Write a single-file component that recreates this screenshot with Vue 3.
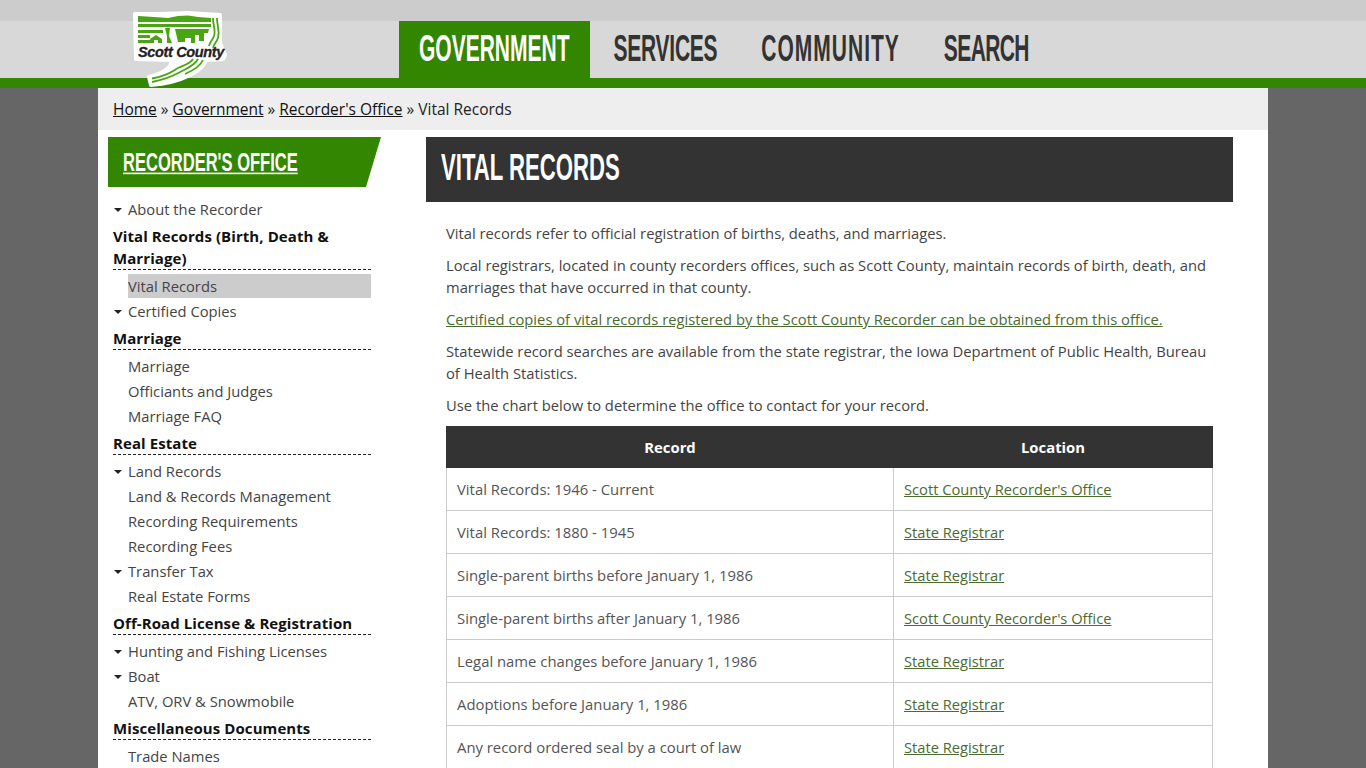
<script setup>
const nav = [
  { t: 'GOVERNMENT', ls: 0 },
  { t: 'SERVICES', ls: -0.25 },
  { t: 'COMMUNITY', ls: 1 },
  { t: 'SEARCH', ls: -0.6 },
]

const side = [
  { t: 'About the Recorder', caret: true },
  { t: 'Vital Records (Birth, Death & Marriage)', head: true },
  { t: 'Vital Records', active: true },
  { t: 'Certified Copies', caret: true },
  { t: 'Marriage', head: true },
  { t: 'Marriage' },
  { t: 'Officiants and Judges' },
  { t: 'Marriage FAQ' },
  { t: 'Real Estate', head: true },
  { t: 'Land Records', caret: true },
  { t: 'Land & Records Management' },
  { t: 'Recording Requirements' },
  { t: 'Recording Fees' },
  { t: 'Transfer Tax', caret: true },
  { t: 'Real Estate Forms' },
  { t: 'Off-Road License & Registration', head: true },
  { t: 'Hunting and Fishing Licenses', caret: true },
  { t: 'Boat', caret: true },
  { t: 'ATV, ORV & Snowmobile' },
  { t: 'Miscellaneous Documents', head: true },
  { t: 'Trade Names' },
]

const rows = [
  ['Vital Records: 1946 - Current', "Scott County Recorder's Office"],
  ['Vital Records: 1880 - 1945', 'State Registrar'],
  ['Single-parent births before January 1, 1986', 'State Registrar'],
  ['Single-parent births after January 1, 1986', "Scott County Recorder's Office"],
  ['Legal name changes before January 1, 1986', 'State Registrar'],
  ['Adoptions before January 1, 1986', 'State Registrar'],
  ['Any record ordered seal by a court of law', 'State Registrar'],
]
</script>

<template>
  <div class="page">
    <header class="header">
      <div class="top-band"></div>
      <div class="nav-band">
        <svg class="logo" width="100" height="80" viewBox="0 0 100 80">
          <path class="logo-bg" d="M5 4 L30 4 L58 3 L90 5 L90 33 L95 45 L93 49 L76 50 C74 56 68 61 58 66 C48 71 34 74 21 75 L19 67 C28 65 36 61 40 56 L42 50 L6 49 Z" />
          <g fill="#4aa512">
            <path d="M8 6 L24 7 L38 8 L48 6 L58 5.500 L68 7 L81 8 L81 12 L8 12 Z" />
            <rect x="8" y="14" width="73" height="3" />
            <rect x="8" y="20" width="25" height="3" />
            <rect x="8" y="25" width="12" height="3" />
            <rect x="8" y="30" width="12" height="3" />
            <path d="M20 33 L20 29 L26 25 L32 29 L32 33 L28 33 L28 30 L24 30 L24 33 Z" />
            <path d="M35 18 L40 18 L39 26 L42 33 L37 33 L37 26 Z" />
            <path d="M45 19 L79 19 L78 23 L74 23 L74 31 L69 31 L69 25 L65 25 L65 33 L61 33 L61 28 L55 28 L55 32 L48 32 Z" />
          </g>
          <g fill="none" stroke="#4aa512" stroke-width="1.800">
            <path d="M83 8 C83 16 86 20 84 26 C82 31 80 32 79 36" />
            <path d="M87 8 C87 16 90 20 88 28 C86 33 84 34 83 38" />
            <path d="M63 49 C60 54 54 55 48 58 C42 61 40 65 22 68.500" />
            <path d="M68 49 C65 55 58 58 52 61 C46 64 42 68 22 72" />
            <path d="M73 50 C70 57 62 61 55 64" />
          </g>
          <text x="8" y="47" class="logo-text">Scott County</text>
        </svg>
        <nav class="nav">
          <a v-for="(n, i) in nav" :key="n.t" class="nav-item" :class="{ on: i === 0 }">
            <span class="tall nav-text" :style="{ letterSpacing: n.ls + 'px' }">{{ n.t }}</span>
          </a>
        </nav>
      </div>
      <div class="green-line"></div>
    </header>

    <div class="wrap">
      <div class="crumbs">
        <a>Home</a> » <a>Government</a> » <a>Recorder's Office</a> » Vital Records
      </div>
      <div class="columns">
        <aside class="side">
          <div class="side-title"><a class="tall">RECORDER'S OFFICE</a></div>
          <ul class="side-list">
            <li
              v-for="(s, i) in side"
              :key="i"
              :class="{ head: s.head, item: !s.head, caret: s.caret }"
            >
              <span :class="{ active: s.active }">{{ s.t }}</span>
            </li>
          </ul>
        </aside>
        <main class="main">
          <h1 class="page-title"><span class="tall">VITAL RECORDS</span></h1>
          <div class="body">
            <p>Vital records refer to official registration of births, deaths, and marriages.</p>
            <p>Local registrars, located in county recorders offices, such as Scott County, maintain records of birth, death, and marriages that have occurred in that county.</p>
            <p><a class="link">Certified copies of vital records registered by the Scott County Recorder can be obtained from this office.</a></p>
            <p>Statewide record searches are available from the state registrar, the Iowa Department of Public Health, Bureau of Health Statistics.</p>
            <p>Use the chart below to determine the office to contact for your record.</p>
            <table class="table">
              <thead>
                <tr><th class="c1">Record</th><th>Location</th></tr>
              </thead>
              <tbody>
                <tr v-for="r in rows" :key="r[0]">
                  <td class="c1">{{ r[0] }}</td>
                  <td><a class="link">{{ r[1] }}</a></td>
                </tr>
              </tbody>
            </table>
          </div>
        </main>
      </div>
    </div>
  </div>
</template>

<style>
html, body {
  margin: 0;
  background: #666;
}
</style>

<style scoped>
.page {
  height: 768px;
  overflow: hidden;
  font-family: "Open Sans", "Liberation Sans", sans-serif;
  font-size: 14.75px;
  line-height: 22px;
  color: #444;
}

/* stand-in for the condensed headline face */
.tall {
  display: inline-block;
  font-family: "Liberation Sans", sans-serif;
  font-weight: 700;
}

.nav-text {
  font-size: 21px;
  transform: scaleY(1.72);
}

.top-band {
  height: 21px;
  background: #ccc;
}

.nav-band {
  position: relative;
  height: 57px;
  background: #d8d8d8;
  padding-left: 399px;
}

.logo {
  position: absolute;
  left: 130px;
  top: -11px;
  z-index: 2;
}

.logo-bg {
  fill: #fff;
  stroke: #fff;
  stroke-width: 4;
  stroke-linejoin: round;
}

.logo-text {
  font-family: "Liberation Sans", sans-serif;
  font-weight: 700;
  font-style: italic;
  font-size: 14.5px;
  letter-spacing: -0.35px;
  fill: #222;
  stroke: #222;
  stroke-width: 0.3;
}

.nav {
  display: flex;
  gap: 4px;
}

.nav-item {
  height: 57px;
  padding: 0 20px;
  line-height: 55px;
  color: #333;
}

.nav-item.on {
  background: #338600;
  color: #fff;
}

.green-line {
  height: 10px;
  background: #338600;
}

.wrap {
  width: 1170px;
  margin: 0 auto;
  background: #fff;
}

.crumbs {
  height: 42px;
  padding-left: 15px;
  font-size: 15.500px;
  line-height: 43px;
  background: #eee;
  color: #222;
}

.crumbs a {
  color: #111;
  text-decoration: underline;
}

.columns {
  display: flex;
  padding: 7px 35px 0 10px;
}

.side {
  width: 273px;
  flex: none;
  margin-right: 45px;
}

.side-title {
  height: 50px;
  padding-left: 15px;
  background: #338600;
  clip-path: polygon(0 0, 100% 0, 258px 100%, 0 100%);
  line-height: 50px;
}

.side-title a {
  font-size: 16.550px;
  transform: scaleY(1.6);
  color: #fff;
  text-decoration: underline;
  text-decoration-thickness: 1px;
}

.side-list {
  list-style: none;
  margin: 10px 10px 0 5px;
  padding: 0;
}

.item {
  position: relative;
  height: 24px;
  margin-bottom: 1px;
  padding-left: 15px;
  line-height: 24px;
  color: #444;
}

.item span {
  display: block;
}

.item .active {
  background: #ccc;
}

.caret::before {
  content: "";
  position: absolute;
  left: 1px;
  top: 11px;
  border: 4px solid transparent;
  border-top-color: #222;
  border-bottom: 0;
}

.head {
  margin: 4px 0 4px;
  border-bottom: 1px dashed #222;
  font-size: 15px;
  letter-spacing: 0.08px;
  font-weight: 700;
  color: #111;
}

.main {
  width: 807px;
  flex: none;
}

.page-title {
  height: 65px;
  margin: 0;
  padding-left: 15px;
  background: #333;
  color: #fff;
  font-weight: 400;
  line-height: 54px;
}

.page-title .tall {
  font-size: 22.150px;
  transform: scaleY(1.66);
}

.body {
  padding: 20px 20px 0;
}

.body p {
  margin: 0 0 10px;
}

.link {
  color: #4c6b30;
  text-decoration: underline;
}

.table {
  width: 767px;
  border-collapse: collapse;
  table-layout: fixed;
  font-size: 14.850px;
}

.table th, .table td {
  box-sizing: border-box;
  padding: 0 10px;
}

.c1 {
  width: 447px;
}

.table th {
  height: 41px;
  border: 1px solid #333;
  background: #333;
  color: #fff;
  font-weight: 700;
  text-align: center;
}

.table td {
  height: 43px;
  border: 1px solid #ccc;
  color: #555;
}

.table td .link {
  color: #4c6b30;
  font-size: 14.700px;
}
</style>
